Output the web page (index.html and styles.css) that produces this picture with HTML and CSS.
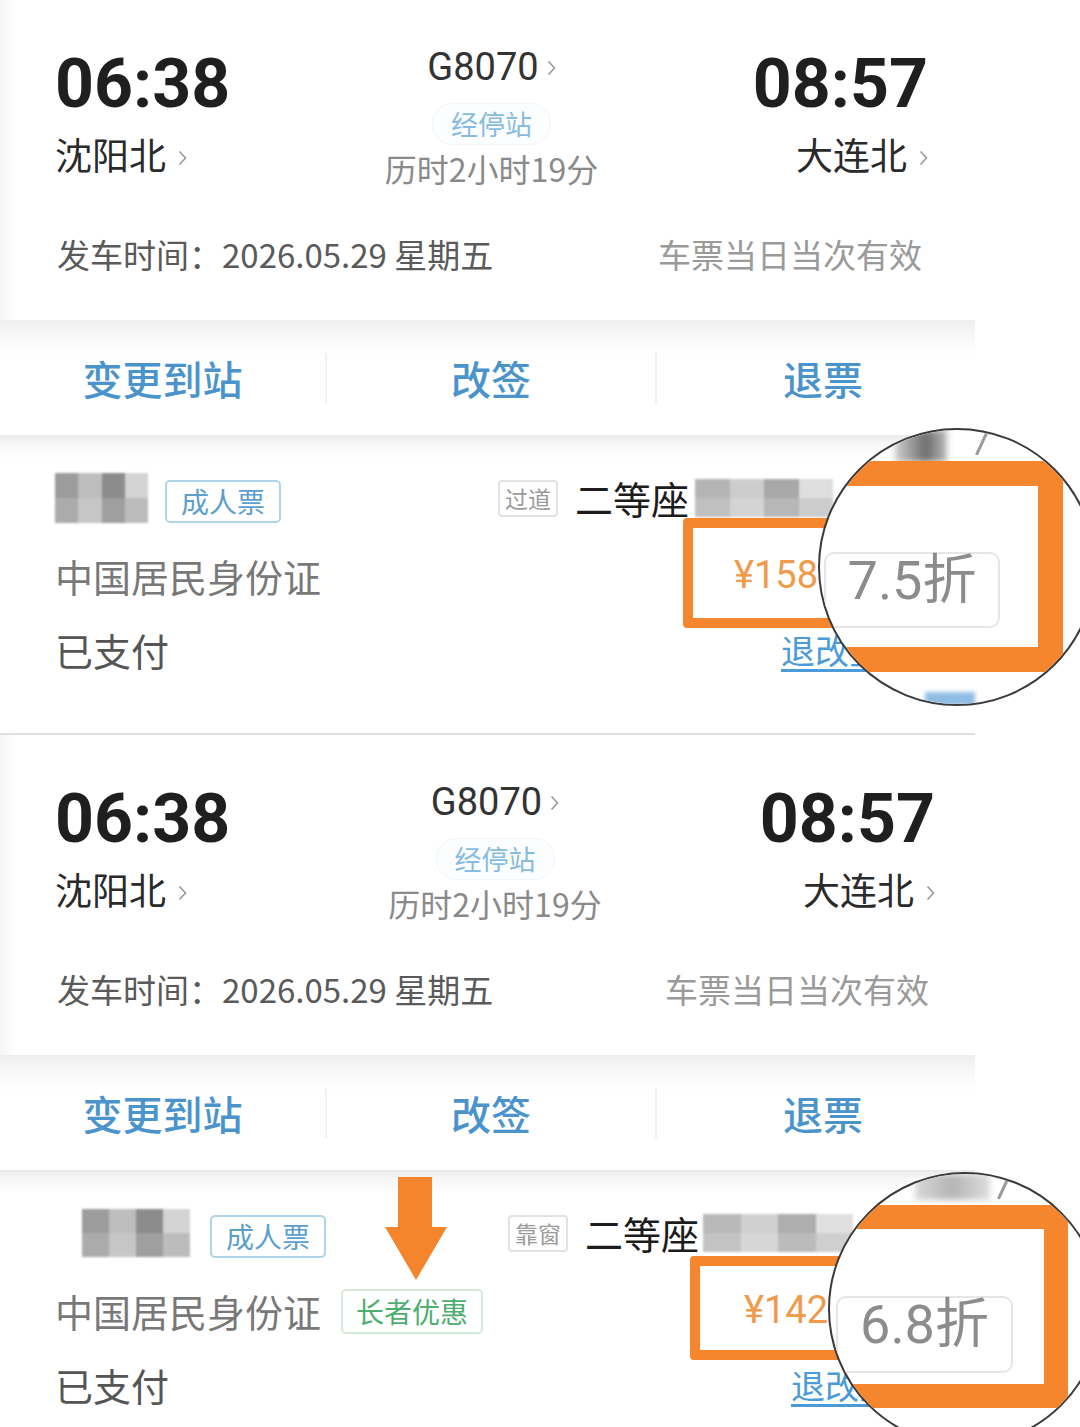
FILE: index.html
```html
<!DOCTYPE html>
<html lang="zh-CN">
<head>
  <meta charset="UTF-8">
  <meta name="viewport" content="width=device-width, initial-scale=1.0">
  <title>车票详情</title>
  <link rel="stylesheet" href="styles.css">
</head>
<body>
<div class="page">

  <!-- 第一张票 -->
  <section class="ticket">
    <div class="trip">
      <div class="trip-main">
        <div class="stop">
          <div class="time">06:38</div>
          <div class="station">沈阳北<svg class="chev" viewBox="0 0 9 16"><path d="M1.5 1.5l6 6.5-6 6.5" fill="none" stroke="#999" stroke-width="1.6"/></svg></div>
        </div>
        <div class="train">
          <div class="train-no">G8070<svg class="chev" viewBox="0 0 9 16"><path d="M1.5 1.5l6 6.5-6 6.5" fill="none" stroke="#999" stroke-width="1.6"/></svg></div>
          <div class="stops-pill">经停站</div>
          <div class="duration">历时2小时19分</div>
        </div>
        <div class="stop stop--end">
          <div class="time">08:57</div>
          <div class="station">大连北<svg class="chev" viewBox="0 0 9 16"><path d="M1.5 1.5l6 6.5-6 6.5" fill="none" stroke="#999" stroke-width="1.6"/></svg></div>
        </div>
      </div>
      <div class="trip-date">
        <span>发车时间：2026.05.29 星期五</span>
        <span class="valid">车票当日当次有效</span>
      </div>
    </div>

    <div class="actions">
      <div class="action">变更到站</div>
      <div class="action">改签</div>
      <div class="action">退票</div>
    </div>

    <div class="passenger">
      <div class="cell">
        <span class="mosaic mosaic--name1"><i></i><i></i><i></i><i></i><i></i><i></i><i></i><i></i></span>
        <span class="tag tag--ticket">成人票</span>
      </div>
      <div class="cell">
        <span class="tag tag--seat">过道</span>
        <span class="seat-class">二等座</span>
        <span class="mosaic mosaic--seat1"><i></i><i></i><i></i><i></i><i></i><i></i><i></i><i></i></span>
      </div>
      <div class="cell id-type">中国居民身份证</div>
      <div class="cell"><span class="price">¥158</span></div>
      <div class="cell paid">已支付</div>
      <div class="cell"><span class="refund">退改签</span></div>

      <div class="hl-box"></div>
      <div class="lens">
        <div class="lens-blur"></div>
        <div class="lens-slash"></div>
        <div class="lens-box"></div>
        <div class="lens-tag">7.5折</div>
        <div class="lens-link"></div>
      </div>
    </div>
  </section>

  <!-- 第二张票 -->
  <section class="ticket ticket--b">
    <div class="trip">
      <div class="trip-main">
        <div class="stop">
          <div class="time">06:38</div>
          <div class="station">沈阳北<svg class="chev" viewBox="0 0 9 16"><path d="M1.5 1.5l6 6.5-6 6.5" fill="none" stroke="#999" stroke-width="1.6"/></svg></div>
        </div>
        <div class="train">
          <div class="train-no">G8070<svg class="chev" viewBox="0 0 9 16"><path d="M1.5 1.5l6 6.5-6 6.5" fill="none" stroke="#999" stroke-width="1.6"/></svg></div>
          <div class="stops-pill">经停站</div>
          <div class="duration">历时2小时19分</div>
        </div>
        <div class="stop stop--end">
          <div class="time">08:57</div>
          <div class="station">大连北<svg class="chev" viewBox="0 0 9 16"><path d="M1.5 1.5l6 6.5-6 6.5" fill="none" stroke="#999" stroke-width="1.6"/></svg></div>
        </div>
      </div>
      <div class="trip-date">
        <span>发车时间：2026.05.29 星期五</span>
        <span class="valid">车票当日当次有效</span>
      </div>
    </div>

    <div class="actions">
      <div class="action">变更到站</div>
      <div class="action">改签</div>
      <div class="action">退票</div>
    </div>

    <div class="passenger">
      <div class="cell">
        <span class="mosaic mosaic--name2"><i></i><i></i><i></i><i></i><i></i><i></i><i></i><i></i></span>
        <span class="tag tag--ticket">成人票</span>
      </div>
      <div class="cell">
        <span class="tag tag--seat">靠窗</span>
        <span class="seat-class">二等座</span>
        <span class="mosaic mosaic--seat2"><i></i><i></i><i></i><i></i><i></i><i></i><i></i><i></i></span>
      </div>
      <div class="cell id-type">中国居民身份证<span class="tag tag--elder">长者优惠</span></div>
      <div class="cell"><span class="price">¥142</span></div>
      <div class="cell paid">已支付</div>
      <div class="cell"><span class="refund">退改签</span></div>

      <svg class="arrow" viewBox="0 0 62 103"><path d="M13 0h34v50h15L31 103 0 50h13z" fill="#f5852d"/></svg>
      <div class="hl-box"></div>
      <div class="lens">
        <div class="lens-blur"></div>
        <div class="lens-slash"></div>
        <div class="lens-box"></div>
        <div class="lens-tag">6.8折</div>
      </div>
    </div>
  </section>

</div>
</body>
</html>
```

FILE: styles.css
```css
* {
  box-sizing: border-box;
  margin: 0;
  padding: 0;
}

body {
  font-family: "Noto Sans CJK SC", "Noto Sans", sans-serif;
  background: #fff;
  color: #333;
}

.page {
  width: 1080px;
  overflow: hidden;
}

.ticket {
  width: 975px;
}

/* 行程部分 */
.trip {
  height: 320px;
  padding: 44px 47px 0 55px;
  background: linear-gradient(to right, #f6f6f6, #fff 16px);
}
.ticket--b .trip {
  padding-right: 40px;
}

.trip-main {
  display: grid;
  grid-template-columns: 1fr auto 1fr;
  align-items: start;
}

.stop--end {
  justify-self: end;
}

.time {
  font-family: Roboto, sans-serif;
  font-weight: 700;
  font-size: 68px;
  line-height: 80px;
  color: #1f1f1f;
}

.station {
  display: flex;
  align-items: center;
  margin-top: 8px;
  font-size: 37px;
  line-height: 44px;
  color: #2a2a2a;
}
.stop--end .station {
  justify-content: flex-end;
}

.chev {
  width: 9px;
  height: 16px;
  margin-left: 12px;
  margin-top: 8px;
}

.train {
  display: flex;
  flex-direction: column;
  align-items: center;
}

.train-no {
  display: flex;
  align-items: center;
  margin-top: 1px;
  font-family: Roboto, sans-serif;
  font-size: 38px;
  line-height: 44px;
  color: #333;
}
.train-no .chev {
  margin-left: 8px;
  margin-top: 2px;
}

.stops-pill {
  margin-top: 14px;
  padding: 3px 18px;
  font-size: 27px;
  line-height: 34px;
  color: #86bce0;
  background: #fbfdfe;
  border: 1px solid #f1f6fa;
  border-radius: 20px;
}

.duration {
  margin-top: 3px;
  font-size: 32px;
  line-height: 40px;
  color: #8a8a8a;
}

.trip-date {
  display: flex;
  justify-content: space-between;
  margin-top: 46px;
  padding-left: 2px;
  font-size: 33px;
  line-height: 40px;
  color: #5a5a5a;
}
.valid {
  padding-right: 6px;
  color: #9a9a9a;
}

/* 操作栏 */
.actions {
  display: grid;
  grid-template-columns: 325px 330px 1fr;
  align-items: center;
  height: 115px;
  background: linear-gradient(#eeeeee, #f8f8f8 16px, #fff 36px);
}

.action {
  text-align: center;
  font-size: 40px;
  line-height: 50px;
  font-weight: 500;
  color: #4b94cb;
}
.action + .action {
  border-left: 2px solid #f1f1f1;
}
.action:last-child {
  padding-left: 14px;
}

/* 乘车人 */
.passenger {
  position: relative;
  display: grid;
  grid-template-columns: 443px 1fr;
  grid-template-rows: 50px 44px 44px;
  row-gap: 30px;
  height: 300px;
  padding: 38px 0 0 55px;
  background: linear-gradient(#eaeaea, #f6f6f6 8px, #fff 24px);
  border-bottom: 2px solid #e0e0e0;
}
.ticket--b .passenger {
  grid-template-columns: 453px 1fr;
  height: 257px;
  border-bottom: 0;
}

.cell {
  display: flex;
  align-items: center;
  white-space: nowrap;
}

.mosaic {
  display: grid;
  grid-template-columns: repeat(4, 1fr);
  grid-template-rows: repeat(2, 1fr);
  filter: blur(1.2px);
}
.mosaic--name1 {
  width: 93px;
  height: 50px;
}
.mosaic--name2 {
  width: 108px;
  height: 48px;
  margin-left: 27px;
}
.mosaic--seat1 {
  width: 138px;
  height: 38px;
  margin-left: 6px;
  opacity: 0.75;
}
.mosaic--seat2 {
  width: 150px;
  height: 38px;
  margin-left: 4px;
  opacity: 0.7;
}
.mosaic i:nth-child(1) { background: #9c9c9c; }
.mosaic i:nth-child(2) { background: #bdbdbd; }
.mosaic i:nth-child(3) { background: #8c8c8c; }
.mosaic i:nth-child(4) { background: #d4d4d4; }
.mosaic i:nth-child(5) { background: #ababab; }
.mosaic i:nth-child(6) { background: #c6c6c6; }
.mosaic i:nth-child(7) { background: #9f9f9f; }
.mosaic i:nth-child(8) { background: #bcbcbc; }

.tag {
  display: inline-block;
  border-radius: 5px;
  white-space: nowrap;
}
.tag--ticket {
  height: 43px;
  margin: 6px 0 0 17px;
  padding: 0 14px;
  border: 2px solid #b0d4ea;
  font-size: 28px;
  line-height: 39px;
  color: #5c9fcd;
}
.ticket--b .tag--ticket {
  margin-left: 20px;
}
.tag--seat {
  height: 37px;
  padding: 0 5px;
  border: 2px solid #e2e2e2;
  border-radius: 4px;
  font-size: 23px;
  line-height: 33px;
  color: #9b9b9b;
}
.tag--elder {
  height: 45px;
  margin: 2px 0 0 20px;
  padding: 0 13px;
  border: 2px solid #d3ead9;
  font-size: 28px;
  line-height: 41px;
  color: #4dae70;
}

.seat-class {
  margin-left: 17px;
  font-size: 38px;
  line-height: 44px;
  color: #1c1c1c;
}

.id-type {
  font-size: 38px;
  color: #787878;
}
.paid {
  font-size: 38px;
  color: #555;
}

.price {
  margin-left: 236px;
  font-family: Roboto, sans-serif;
  font-size: 38px;
  color: #f09a4c;
}
.refund {
  margin-left: 283px;
  font-size: 34px;
  color: #4b9bd8;
  text-decoration: underline;
  text-underline-offset: 5px;
}

/* 标注 */
.hl-box {
  position: absolute;
  left: 683px;
  top: 83px;
  width: 340px;
  height: 110px;
  border: 10px solid #f5862e;
  border-radius: 4px;
  z-index: 1;
}
.ticket--b .hl-box {
  left: 690px;
  top: 86px;
  height: 104px;
}

.arrow {
  position: absolute;
  left: 385px;
  top: 7px;
  width: 62px;
  height: 103px;
  z-index: 1;
}

.lens {
  position: absolute;
  left: 818px;
  top: -7px;
  width: 278px;
  height: 278px;
  border: 2px solid #3a3a3a;
  border-radius: 50%;
  background: #fff;
  overflow: hidden;
  z-index: 2;
}
.ticket--b .lens {
  left: 828px;
  top: 2px;
  width: 274px;
  height: 274px;
}

.lens-box {
  position: absolute;
  left: -100px;
  top: 31px;
  width: 343px;
  height: 211px;
  border: 25px solid #f5862e;
  border-radius: 6px;
}
.ticket--b .lens-box {
  width: 338px;
  height: 203px;
  border-width: 24px;
}

.lens-tag {
  position: absolute;
  left: 4px;
  top: 122px;
  width: 176px;
  height: 76px;
  border: 2px solid #e6e6e6;
  border-radius: 10px;
  text-align: center;
  font-family: Roboto, "Noto Sans CJK SC", sans-serif;
  font-size: 54px;
  line-height: 54px;
  color: #8c8c8c;
}
.ticket--b .lens-tag {
  left: 6px;
  width: 177px;
  height: 77px;
}

.lens-blur {
  position: absolute;
  left: 75px;
  top: 0;
  width: 52px;
  height: 32px;
  background: linear-gradient(to right, #cfcfcf, #6d6d6d 60%, #bbb);
  filter: blur(3px);
}
.ticket--b .lens-blur {
  left: 85px;
  width: 75px;
  height: 26px;
  background: linear-gradient(to right, #d8d8d8, #b5b5b5 50%, #ddd);
}

.lens-slash {
  position: absolute;
  left: 160px;
  top: 2px;
  width: 3px;
  height: 24px;
  background: #9a9a9a;
  transform: rotate(25deg);
  filter: blur(0.6px);
}
.ticket--b .lens-slash {
  left: 172px;
}

.lens-link {
  position: absolute;
  left: 105px;
  top: 262px;
  width: 50px;
  height: 14px;
  background: #8fbde3;
  filter: blur(2px);
}
```
